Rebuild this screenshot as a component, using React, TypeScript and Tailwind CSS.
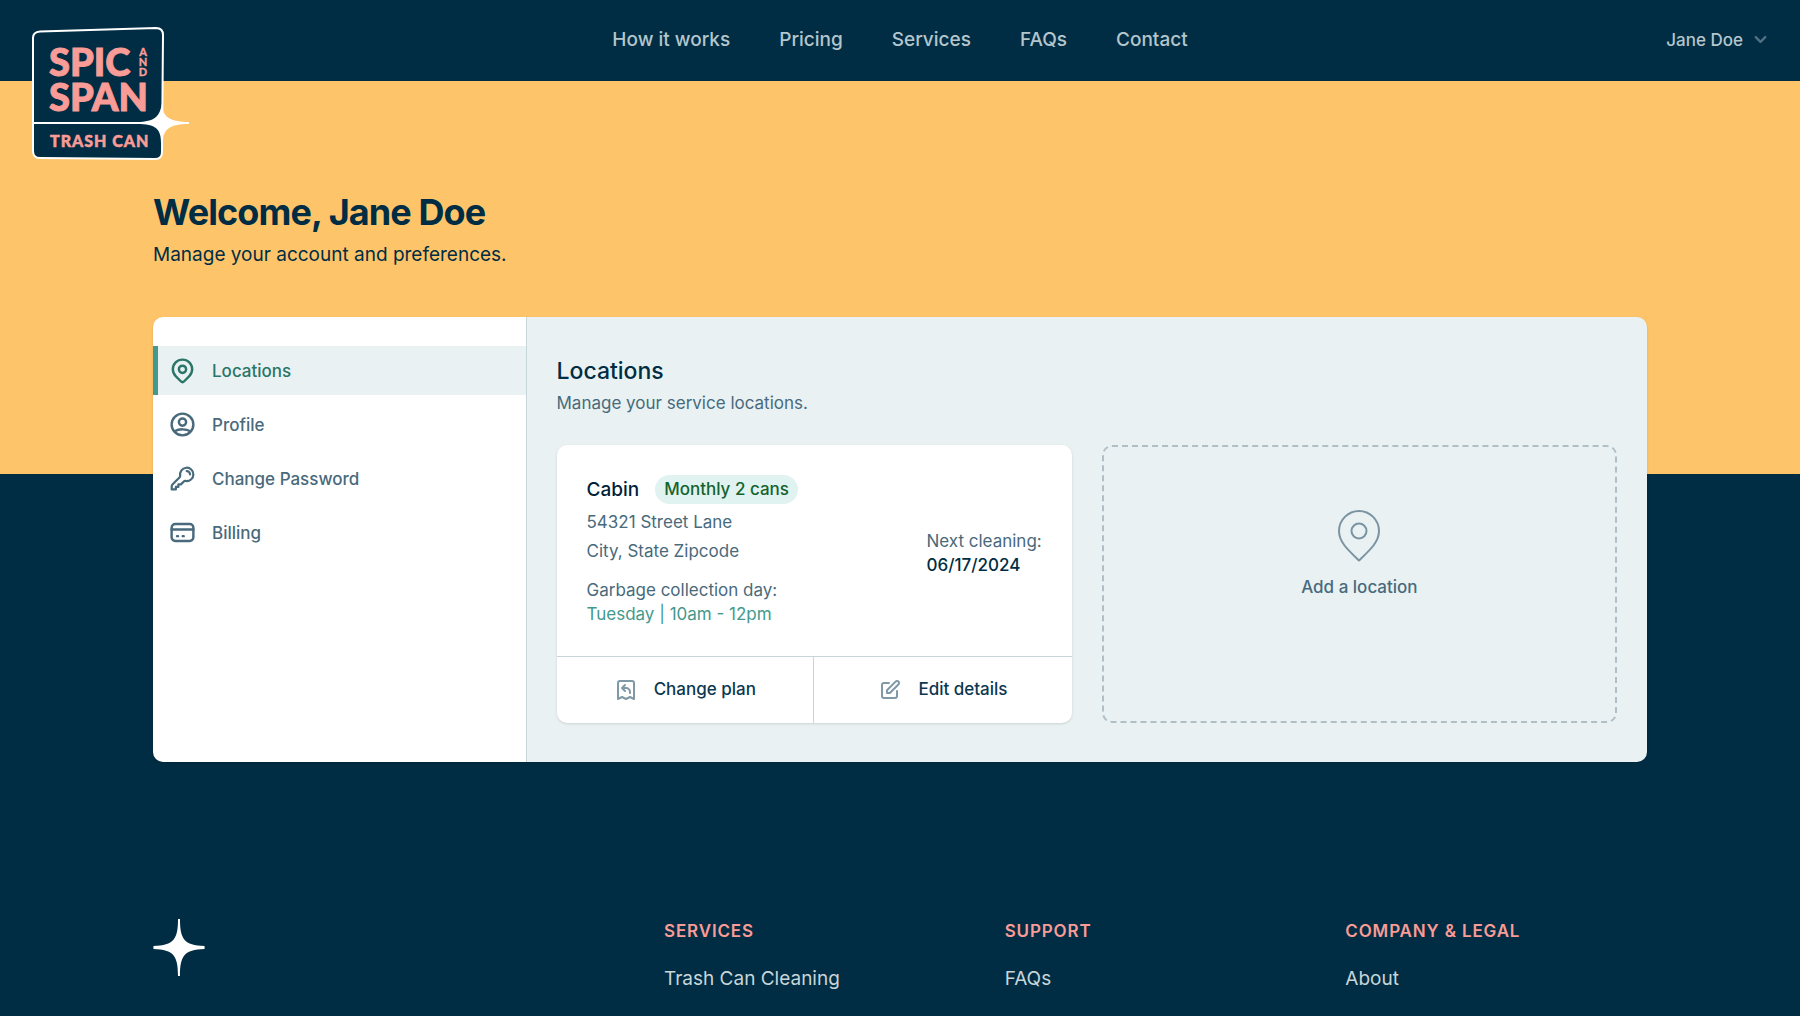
import type { ReactNode } from "react"

const navLinks = ["How it works", "Pricing", "Services", "FAQs", "Contact"]

const footerColumns = [
  { title: "Services", links: ["Trash Can Cleaning"] },
  { title: "Support", links: ["FAQs"] },
  { title: "Company & Legal", links: ["About"] },
]

type IconProps = { className?: string; strokeWidth?: number; children?: ReactNode }

function Icon({ className, strokeWidth = 2, children }: IconProps) {
  return (
    <svg
      className={className}
      viewBox="0 0 24 24"
      fill="none"
      stroke="currentColor"
      strokeWidth={strokeWidth}
      strokeLinecap="round"
      strokeLinejoin="round"
      aria-hidden="true"
    >
      {children}
    </svg>
  )
}

const sidebarItems = [
  {
    label: "Locations",
    icon: (
      <>
        <circle cx="12" cy="11" r="3" />
        <path d="M17.657 16.657l-4.243 4.243a2 2 0 0 1-2.827 0l-4.244-4.243a8 8 0 1 1 11.314 0z" />
      </>
    ),
  },
  {
    label: "Profile",
    icon: (
      <path d="M5.121 17.804A13.937 13.937 0 0 1 12 16c2.500 0 4.847.655 6.879 1.804M15 10a3 3 0 1 1-6 0 3 3 0 0 1 6 0zm6 2a9 9 0 1 1-18 0 9 9 0 0 1 18 0z" />
    ),
  },
  {
    label: "Change Password",
    icon: (
      <path
        transform="translate(1 1) scale(0.92)"
        d="M15.750 5.250a3 3 0 0 1 3 3m3 0a6 6 0 0 1-7.029 5.912c-.563-.097-1.159.026-1.563.430L10.500 17.250H8.250v2.250H6v2.250H2.250v-2.818c0-.597.237-1.170.659-1.591l6.499-6.499c.404-.404.527-1 .430-1.563A6 6 0 1 1 21.750 8.250Z"
      />
    ),
  },
  {
    label: "Billing",
    icon: (
      <>
        <rect x="3" y="5" width="18" height="14" rx="3" />
        <path d="M3 9.500h18M7.500 15h.8M12.200 15h.8" />
      </>
    ),
  },
]

function Logo() {
  return (
    <svg className="h-[136px] w-40" viewBox="0 0 160 136" role="img" aria-label="Spic and Span Trash Can">
      <path
        d="M9 6.500 L125 3 Q132 3 132 10 L131 127 Q131 134 124 134 L9 133 Q2 133 2 126 V13 Q2 7 9 6.500 Z"
        fill="#002d43"
        stroke="#fff"
        strokeWidth="2"
      />
      <path d="M2 98 H131" stroke="#fff" strokeWidth="2" />
      <path
        d="M131 78 C131 91 138 97 158 97 V99 C139 99 132 104 131.500 118 H130 C130 104 125 99 106 99 V97 C124 97 129 91 131 78 Z"
        fill="#fff"
      />
      <g fill="#f99b96" stroke="#f99b96" fontFamily="Lato, sans-serif" fontWeight="900">
        <g fontSize="38" strokeWidth="1">
          <text x="18" y="51">SPIC</text>
          <text x="18" y="86">SPAN</text>
        </g>
        <text x="19" y="122" fontSize="16" letterSpacing="1" strokeWidth="0.5">TRASH CAN</text>
        <g fontSize="11" textAnchor="middle" strokeWidth="0.3">
          <text x="112" y="31">A</text>
          <text x="112" y="41">N</text>
          <text x="112" y="51">D</text>
        </g>
      </g>
    </svg>
  )
}

function Header() {
  return (
    <header className="relative flex h-[81px] items-center justify-center bg-[#002d43] px-8 pb-[2px]">
      <a href="#" className="absolute top-[25px] left-[31px]">
        <Logo />
      </a>
      <nav className="flex gap-[49px]">
        {navLinks.map((link) => (
          <a key={link} href="#" className="text-[19px] leading-7 font-medium text-[#b4c5cc]">
            {link}
          </a>
        ))}
      </nav>
      <button type="button" className="absolute right-[30px] flex items-center gap-2 text-[17px] leading-6 font-medium text-[#b4c5cc]">
        Jane Doe
        <Icon className="size-[19px] text-[#4f7083]" strokeWidth={3}>
          <path d="M6 9l6 6 6-6" />
        </Icon>
      </button>
    </header>
  )
}

function Sidebar() {
  return (
    <aside className="col-span-3 border-r border-[#c8d5d9] bg-white py-[29px]">
      <nav className="flex flex-col gap-[5px]">
        {sidebarItems.map(({ label, icon }, i) => (
          <a
            key={label}
            href="#"
            aria-current={i === 0 ? "page" : undefined}
            className={`flex h-[49px] items-center gap-[15px] border-l-5 pl-[10px] text-[17px] leading-6 font-medium ${
              i === 0 ? "border-[#43998d] bg-[#e9f1f3] text-[#2b7568]" : "border-transparent text-[#486a7c]"
            }`}
          >
            <Icon className="size-[29px]">{icon}</Icon>
            {label}
          </a>
        ))}
      </nav>
    </aside>
  )
}

function LocationCard() {
  return (
    <article className="flex flex-col overflow-hidden rounded-[10px] bg-white text-[17px] shadow-sm">
      <div className="flex flex-1 items-center justify-between p-[30px]">
        <div className="leading-6 text-[#486a7c]">
          <div className="flex items-center gap-4">
            <h3 className="text-[19px] leading-[29px] font-medium text-[#001f38]">Cabin</h3>
            <span className="rounded-full bg-[#e1f3f0] px-[9px] leading-[29px] font-medium text-[#14632f]">
              Monthly 2 cans
            </span>
          </div>
          <p className="mt-1 leading-[29px]">54321 Street Lane</p>
          <p className="leading-[29px]">City, State Zipcode</p>
          <p className="mt-3">Garbage collection day:</p>
          <p className="text-[#43998d]">Tuesday | 10am - 12pm</p>
        </div>
        <div className="pt-1 leading-6">
          <p className="text-[#486a7c]">Next cleaning:</p>
          <p className="font-medium text-[#002d43]">06/17/2024</p>
        </div>
      </div>
      <div className="grid h-[67px] grid-cols-2 divide-x divide-[#c8d5d9] border-t border-[#c8d5d9] font-medium text-[#0c3850]">
        <button type="button" className="flex items-center justify-center gap-4">
          <Icon className="size-6 text-[#8099a6]">
            <path d="M16 15v-1a4 4 0 0 0-4-4H8m0 0l3 3m-3-3l3-3m9 14V5a2 2 0 0 0-2-2H6a2 2 0 0 0-2 2v16l4-2 4 2 4-2 4 2z" />
          </Icon>
          Change plan
        </button>
        <button type="button" className="flex items-center justify-center gap-4">
          <Icon className="size-6 text-[#8099a6]">
            <path d="M11 5H6a2 2 0 0 0-2 2v11a2 2 0 0 0 2 2h11a2 2 0 0 0 2-2v-5m-1.414-9.414a2 2 0 1 1 2.828 2.828L11.828 15H9v-2.828l8.586-8.586z" />
          </Icon>
          Edit details
        </button>
      </div>
    </article>
  )
}

function Locations() {
  return (
    <section className="col-span-9 bg-[#e9f1f3] px-[30px] pt-10 pb-[39px]">
      <h2 className="text-[23px] leading-[29px] font-medium text-[#002d43]">Locations</h2>
      <p className="mt-[5px] text-[17px] leading-6 text-[#486a7c]">Manage your service locations.</p>
      <div className="mt-[30px] grid grid-cols-2 gap-[30px]">
        <LocationCard />
        <button
          type="button"
          className="flex flex-col items-center justify-center gap-[13px] rounded-[10px] border-2 border-dashed border-[#b0bfc6] pb-[60px] text-[17px] leading-6 font-medium text-[#486a7c]"
        >
          <svg
            className="h-[52px] w-[42px] text-[#7b94a2]"
            viewBox="0 0 42 52"
            fill="none"
            stroke="currentColor"
            strokeWidth="2"
            strokeLinejoin="round"
            aria-hidden="true"
          >
            <path d="M21 50.500C10 40 1 32 1 21a20 20 0 0 1 40 0C41 32 32 40 21 50.500z" />
            <circle cx="21" cy="21" r="7.500" />
          </svg>
          Add a location
        </button>
      </div>
    </section>
  )
}

function Footer() {
  return (
    <footer className="mt-[157px] grid grid-cols-3 gap-[39px] pb-5">
      <svg className="h-[57px] w-[52px]" viewBox="0 0 52 58" fill="#fff" aria-hidden="true">
        <path d="M25 0h2c0 20 4 27 25 27.500v3C31 31 27 38 27 58h-2c0-20-4-27-25-27.500v-3C21 27 25 20 25 0z" />
      </svg>
      <div className="col-span-2 grid grid-cols-3 gap-[39px]">
        {footerColumns.map(({ title, links }) => (
          <div key={title}>
            <h3 className="text-[17px] leading-6 font-semibold tracking-wider text-[#f99b96] uppercase">{title}</h3>
            <ul className="mt-[21px]">
              {links.map((link) => (
                <li key={link}>
                  <a href="#" className="text-[19px] leading-[29px] text-[#c8d5d9]">
                    {link}
                  </a>
                </li>
              ))}
            </ul>
          </div>
        ))}
      </div>
    </footer>
  )
}

export default function App() {
  return (
    <div className="min-h-screen bg-[#002d43] font-['Inter',sans-serif] antialiased">
      <Header />
      {/* Yellow band runs behind the top of the account panel */}
      <div className="bg-linear-to-b from-[#fec46a] from-[393px] to-[#002d43] to-[393px]">
        <div className="mx-auto max-w-[1494px]">
          <main className="pt-[108px]">
            <h1 className="text-[36px] leading-[46px] font-bold tracking-tight text-[#002d43]">Welcome, Jane Doe</h1>
            <p className="mt-[5px] text-[19px] leading-[29px] text-[#002d43]">Manage your account and preferences.</p>
            <div className="mt-12 grid grid-cols-12 overflow-hidden rounded-[10px] shadow-sm">
              <Sidebar />
              <Locations />
            </div>
          </main>
          <Footer />
        </div>
      </div>
    </div>
  )
}
